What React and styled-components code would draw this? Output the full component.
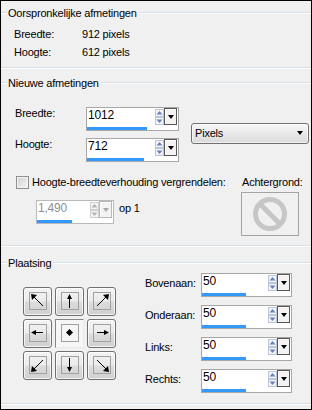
import React from 'react';
import styled, { createGlobalStyle, css } from 'styled-components';

const Global = createGlobalStyle`
  html, body { margin: 0; padding: 0; background: #f0f0f0; }
  body {
    font-family: "Liberation Sans", Arial, sans-serif;
    font-size: 11px;
    letter-spacing: -0.2px;
    color: #000;
  }
  * { box-sizing: border-box; }
`;

const Window = styled.div`
  width: 312px;
  height: 410px;
  overflow: hidden;
  background: #f0f0f0;
  border: 1px solid #000;
  display: flex;
  flex-direction: column;
  padding-top: 4px;
`;

const Etch = styled.div`
  height: 2px;
  border-top: 1px solid #d5dfe5;
  border-bottom: 1px solid #fff;
  margin-top: ${p => p.$mt || 0}px;
`;

const Group = styled.section`
  display: flex;
  flex-direction: column;
  margin-top: ${p => p.$mt || 0}px;
`;

const Header = styled.div`
  display: flex;
  align-items: center;
  height: 16px;
`;

const HeaderLead = styled(Etch)`
  width: 6px;
  flex: none;
`;

const HeaderLine = styled(Etch)`
  flex: 1;
`;

const Title = styled.span`
  padding: 0 2px 0 1px;
  line-height: 16px;
  white-space: nowrap;
`;

const InfoGrid = styled.div`
  display: grid;
  grid-template-columns: 68px auto;
  grid-auto-rows: 18px;
  padding: 4px 0 0 13px;
  line-height: 18px;
`;

const SizeArea = styled.div`
  display: flex;
  align-items: center;
  padding: 16px 0 0 14px;
`;

const SizeGrid = styled.div`
  display: grid;
  grid-template-columns: 71px auto;
  row-gap: 7px;
`;

const FieldLabel = styled.span`
  line-height: ${p => p.$lh || 13}px;
  padding-top: ${p => p.$pt || 0}px;
  white-space: nowrap;
`;

const Spin = styled.div`
  width: ${p => p.$w}px;
  height: 24px;
  border: 1px solid ${p => (p.$disabled ? '#b9b9b9' : '#a7a7a7')};
  background: #fff;
  display: flex;
  flex-direction: column;
`;

const SpinTop = styled.div`
  display: flex;
  height: 17px;
`;

const SpinText = styled.div`
  flex: 1;
  padding-left: 1px;
  line-height: 15px;
  font-size: 12px;
  color: ${p => (p.$disabled ? '#8f8f8f' : '#000')};
`;

const ArrowCol = styled.svg`
  display: block;
  flex: none;
  margin-top: 1px;
`;

const DropBtn = styled.div`
  width: 13px;
  height: 17px;
  flex: none;
  margin-right: 1px;
  border: 1px solid ${p => (p.$disabled ? '#b8b8b8' : '#555')};
  box-shadow: inset 1px 1px 0 #fff;
  background: #f3f3f3;
  display: flex;
  align-items: center;
  justify-content: center;
`;

const Tri = styled.span`
  width: 0;
  height: 0;
  border-left: ${p => p.$s}px solid transparent;
  border-right: ${p => p.$s}px solid transparent;
  border-top: ${p => p.$h}px solid ${p => p.$c || '#000'};
`;

const SpinBar = styled.div`
  padding-top: 2px;
  height: 5px;
`;

const BarFill = styled.div`
  height: 3px;
  background: #3399ff;
`;

const Select = styled.div`
  width: 118px;
  height: 21px;
  margin-left: 12px;
  margin-top: -3px;
  border: 1px solid #707070;
  border-radius: 3px;
  background: linear-gradient(#f7f7f7, #e6e6e6 60%, #dadada);
  box-shadow: inset 0 0 0 1px rgba(255, 255, 255, 0.6);
  display: flex;
  align-items: center;
  justify-content: space-between;
  padding: 0 5px 0 3px;
`;

const OptionsArea = styled.div`
  display: flex;
  margin-top: 13px;
  padding-left: 15px;
`;

const OptionsLeft = styled.div`
  display: flex;
  flex-direction: column;
  flex: 1;
`;

const CheckRow = styled.label`
  display: flex;
  align-items: center;
  gap: 3px;
  height: 14px;
  white-space: nowrap;
`;

const CheckBox = styled.span`
  width: 13px;
  height: 13px;
  flex: none;
  border: 1px solid #8e8f8f;
  box-shadow: inset 0 0 0 1px #f4f4f4;
  background: linear-gradient(135deg, #cfcfcf, #f6f6f6);
`;

const RatioRow = styled.div`
  display: flex;
  align-items: flex-start;
  gap: 5px;
  margin: 11px 0 0 20px;
`;

const PlainText = styled.span`
  line-height: 16px;
  white-space: nowrap;
`;

const OptionsRight = styled.div`
  display: flex;
  flex-direction: column;
  width: 58px;
  margin-right: 12px;
`;

const BgLabel = styled.span`
  line-height: 14px;
  padding-left: 1px;
  white-space: nowrap;
`;

const BgPreview = styled.div`
  margin-top: 3px;
  width: 58px;
  height: 44px;
  border: 1px solid #a3a3a3;
  background: #f0f0f0;
  display: flex;
  align-items: center;
  justify-content: center;
`;

const PlaceArea = styled.div`
  display: flex;
  align-items: center;
  padding: 2px 0 0 22px;
`;

const AlignGrid = styled.div`
  display: grid;
  grid-template-columns: repeat(3, 29px);
  grid-auto-rows: 29px;
  gap: 3px;
`;

const AlignBtn = styled.div`
  width: 29px;
  height: 29px;
  display: flex;
  align-items: center;
  justify-content: center;
  ${p =>
    p.$pressed
      ? css`
          border: 1px solid;
          border-color: #858585 #e9e9e9 #e9e9e9 #858585;
          background: #f6f6f6;
        `
      : css`
          border: 1px solid #707070;
          border-radius: 3px;
          background: linear-gradient(#f3f3f3 0%, #ebebeb 48%, #dcdcdc 52%, #cfcfcf 100%);
          box-shadow: inset 0 0 0 1px rgba(255, 255, 255, 0.75);
        `}
`;

const AlignInner = styled.span`
  width: 18px;
  height: 18px;
  border: 1px solid #a0a0a0;
  display: flex;
  align-items: center;
  justify-content: center;
`;

const MarginGrid = styled.div`
  display: grid;
  grid-template-columns: 56px auto;
  row-gap: 8px;
  margin-left: 29px;
`;

const arrows = {
  nw: { line: [3, 3, 13, 13], head: '1,1 7,2 2,7' },
  n: { line: [7.5, 3, 7.5, 15], head: '7.5,1 5,6 10,6' },
  ne: { line: [13, 3, 3, 13], head: '15,1 9,2 14,7' },
  w: { line: [3, 7.5, 13, 7.5], head: '1,7.5 6,5 6,10' },
  e: { line: [3, 7.5, 13, 7.5], head: '15,7.5 10,5 10,10' },
  sw: { line: [3, 13, 13, 3], head: '1,15 2,9 7,14' },
  s: { line: [7.5, 1, 7.5, 13], head: '7.5,15 5,10 10,10' },
  se: { line: [3, 3, 13, 13], head: '15,15 9,14 14,9' },
};

function AlignIcon({ dir }) {
  if (dir === 'c') {
    return (
      <svg width="16" height="16" viewBox="0 0 16 16">
        <polygon points="7.5,4 11,7.5 7.5,11 4,7.5" fill="#000" />
      </svg>
    );
  }
  const a = arrows[dir];
  return (
    <svg width="16" height="16" viewBox="0 0 16 16">
      <line x1={a.line[0]} y1={a.line[1]} x2={a.line[2]} y2={a.line[3]} stroke="#000" strokeWidth="1" />
      <polygon points={a.head} fill="#000" />
    </svg>
  );
}

function SpinArrows({ disabled }) {
  const fill = disabled ? '#b5b5b5' : '#6a80bd';
  const bg = disabled ? '#f3f3f3' : '#f1f4f9';
  const st = disabled ? '#cfcfcf' : '#bcc6d6';
  return (
    <ArrowCol width="9" height="16" viewBox="0 0 9 16">
      <rect x="0.5" y="0.5" width="8" height="7" fill={bg} stroke={st} />
      <polygon points="4.5,2 1.5,5.5 7.5,5.5" fill={fill} />
      <rect x="0.5" y="8.5" width="8" height="7" fill={bg} stroke={st} />
      <polygon points="4.5,14 1.5,10.5 7.5,10.5" fill={fill} />
    </ArrowCol>
  );
}

function SpinBox({ value, width, bar, disabled }) {
  return (
    <Spin $w={width} $disabled={disabled}>
      <SpinTop>
        <SpinText $disabled={disabled}>{value}</SpinText>
        <SpinArrows disabled={disabled} />
        <DropBtn $disabled={disabled}>
          <Tri $s={3} $h={4} $c={disabled ? '#a8a8a8' : '#000'} />
        </DropBtn>
      </SpinTop>
      <SpinBar>
        <BarFill style={{ width: bar }} />
      </SpinBar>
    </Spin>
  );
}

function GroupHeader({ children }) {
  return (
    <Header>
      <HeaderLead />
      <Title>{children}</Title>
      <HeaderLine />
    </Header>
  );
}

export default function App() {
  const margins = [
    ['Bovenaan:', 44],
    ['Onderaan:', 44],
    ['Links:', 44],
    ['Rechts:', 44],
  ];
  const dirs = ['nw', 'n', 'ne', 'w', 'c', 'e', 'sw', 's', 'se'];
  return (
    <>
      <Global />
      <Window>
        <Group>
          <GroupHeader>Oorspronkelijke afmetingen</GroupHeader>
          <InfoGrid>
            <span>Breedte:</span>
            <span>912 pixels</span>
            <span>Hoogte:</span>
            <span>612 pixels</span>
          </InfoGrid>
          <Etch $mt={6} />
        </Group>

        <Group $mt={6}>
          <GroupHeader>Nieuwe afmetingen</GroupHeader>
          <SizeArea>
            <SizeGrid>
              <FieldLabel>Breedte:</FieldLabel>
              <SpinBox value="1012" width={93} bar={60} />
              <FieldLabel>Hoogte:</FieldLabel>
              <SpinBox value="712" width={93} bar={57} />
            </SizeGrid>
            <Select>
              <span>Pixels</span>
              <Tri $s={3.5} $h={4} />
            </Select>
          </SizeArea>
          <OptionsArea>
            <OptionsLeft>
              <CheckRow>
                <CheckBox />
                Hoogte-breedteverhouding vergrendelen:
              </CheckRow>
              <RatioRow>
                <SpinBox value="1,490" width={78} bar={35} disabled />
                <PlainText>op 1</PlainText>
              </RatioRow>
            </OptionsLeft>
            <OptionsRight>
              <BgLabel>Achtergrond:</BgLabel>
              <BgPreview>
                <svg width="36" height="36" viewBox="0 0 36 36">
                  <circle cx="18" cy="18" r="14.5" fill="none" stroke="#c6c6c6" strokeWidth="5" />
                  <line x1="8" y1="8" x2="28" y2="28" stroke="#c6c6c6" strokeWidth="5" />
                </svg>
              </BgPreview>
            </OptionsRight>
          </OptionsArea>
          <Etch $mt={9} />
        </Group>

        <Group $mt={8}>
          <GroupHeader>Plaatsing</GroupHeader>
          <PlaceArea>
            <AlignGrid>
              {dirs.map(d => (
                <AlignBtn key={d} $pressed={d === 'c'}>
                  <AlignInner>
                    <AlignIcon dir={d} />
                  </AlignInner>
                </AlignBtn>
              ))}
            </AlignGrid>
            <MarginGrid>
              {margins.map(([label, bar]) => (
                <React.Fragment key={label}>
                  <FieldLabel $lh={20}>{label}</FieldLabel>
                  <SpinBox value="50" width={91} bar={bar} />
                </React.Fragment>
              ))}
            </MarginGrid>
          </PlaceArea>
          <Etch $mt={10} />
        </Group>
      </Window>
    </>
  );
}
